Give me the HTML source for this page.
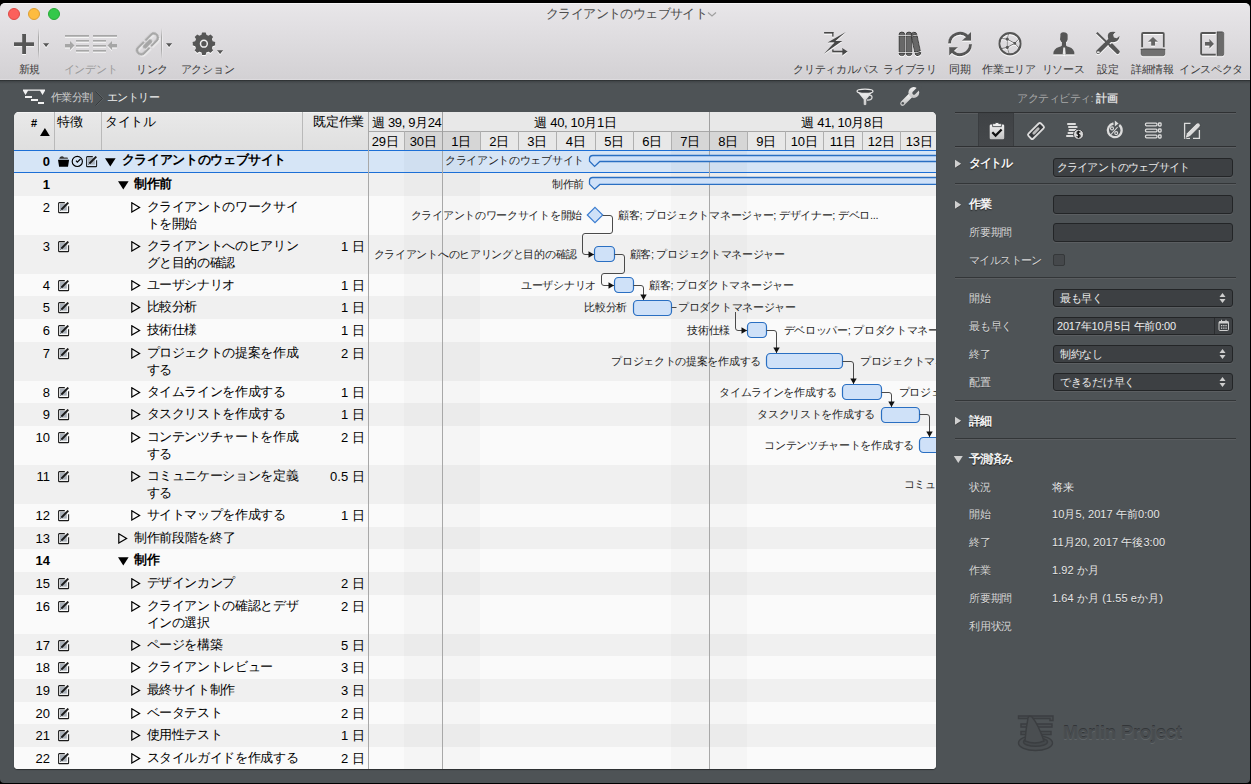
<!DOCTYPE html><html><head><meta charset="utf-8"><style>

*{box-sizing:border-box}
html,body{margin:0;padding:0}
body{width:1251px;height:784px;overflow:hidden;background:#000;position:relative;font-family:"Liberation Sans", sans-serif}
.a{position:absolute;white-space:nowrap}
.tb{font-size:11px;color:#3a3a3a;line-height:12px;text-align:center;letter-spacing:-0.3px}
.cell{font-size:13px;color:#000;line-height:15px;letter-spacing:-0.35px}
.num{font-size:13px;letter-spacing:0}
.ins{font-size:11px;color:#d8d8d8;line-height:12px}

</style></head><body>
<div class="a" style="left:0;top:3px;width:1250px;height:780px;border-radius:5px 5px 4px 4px;background:#4e5356;overflow:hidden"></div>
<div class="a" style="left:0;top:80px;width:1250px;height:4px;background:linear-gradient(#272a2c,rgba(60,64,67,0.6) 40%,rgba(78,83,86,0))"></div>
<div class="a" style="left:0;top:3px;width:1250px;height:77px;border-radius:5px 5px 0 0;background:linear-gradient(#e8e6e9,#d3d1d4);border-top:1px solid #f4f3f5;border-bottom:1px solid #dddbde"></div>
<div class="a" style="left:8px;top:8px;width:12px;height:12px;border-radius:50%;background:#fc605c;border:0.5px solid #de4a46"></div>
<div class="a" style="left:28px;top:8px;width:12px;height:12px;border-radius:50%;background:#fdbc40;border:0.5px solid #de9f34"></div>
<div class="a" style="left:48px;top:8px;width:12px;height:12px;border-radius:50%;background:#34c84a;border:0.5px solid #27aa35"></div>
<div class="a" style="left:546px;top:6px;font-size:13px;line-height:15px;color:#4d4d4d;letter-spacing:-0.6px">クライアントのウェブサイト</div>
<svg class="a" style="left:706px;top:10px" width="12" height="8"><path d="M2 2.5 L6 6 L10 2.5" stroke="#a0a0a0" stroke-width="1.2" fill="none"/></svg>
<div class="a tb" style="left:-20.5px;width:100px;top:63px;color:#3a3a3a">新規</div>
<div class="a tb" style="left:40.5px;width:100px;top:63px;color:#9a9a9a">インデント</div>
<div class="a tb" style="left:102px;width:100px;top:63px;color:#3a3a3a">リンク</div>
<div class="a tb" style="left:157.5px;width:100px;top:63px;color:#3a3a3a">アクション</div>
<div class="a tb" style="left:786px;width:100px;top:63px;color:#3a3a3a">クリティカルパス</div>
<div class="a tb" style="left:860px;width:100px;top:63px;color:#3a3a3a">ライブラリ</div>
<div class="a tb" style="left:910px;width:100px;top:63px;color:#3a3a3a">同期</div>
<div class="a tb" style="left:959px;width:100px;top:63px;color:#3a3a3a">作業エリア</div>
<div class="a tb" style="left:1013px;width:100px;top:63px;color:#3a3a3a">リソース</div>
<div class="a tb" style="left:1058px;width:100px;top:63px;color:#3a3a3a">設定</div>
<div class="a tb" style="left:1102.5px;width:100px;top:63px;color:#3a3a3a">詳細情報</div>
<div class="a tb" style="left:1161px;width:100px;top:63px;color:#3a3a3a">インスペクタ</div>
<div class="a" style="left:14px;top:112px;width:922px;height:657px;border-radius:5px 5px 4px 4px;background:#fafafa;overflow:hidden;box-shadow:0 1px 1px rgba(0,0,0,0.45)">
<div class="a" style="left:0;top:0;width:922px;height:38px;background:linear-gradient(#e9e9e9,#dfdfdf);box-shadow:inset 0 1px 0 #f4f4f4"></div>
<div class="a" style="left:40px;top:0;width:1px;height:38px;background:#b9b9b9"></div>
<div class="a" style="left:87px;top:0;width:1px;height:38px;background:#b9b9b9"></div>
<div class="a" style="left:288px;top:0;width:1px;height:38px;background:#b9b9b9"></div>
<div class="a cell" style="left:17px;top:4px;font-size:11px;font-weight:bold">#</div>
<svg class="a" style="left:25.5px;top:16.19999999999999px" width="11" height="9"><path d="M0 8 L4.9 0 L9.8 8 Z" fill="#000"/></svg>
<div class="a cell" style="left:43px;top:2px">特徴</div>
<div class="a cell" style="left:91px;top:2px">タイトル</div>
<div class="a cell" style="left:286px;width:64px;text-align:right;top:2px">既定作業</div>
<div class="a" style="left:0;top:38px;width:922px;height:23px;background:#d6e5f6"></div>
<div class="a" style="left:0;top:61px;width:922px;height:23px;background:#f0f0f0"></div>
<div class="a" style="left:0;top:84px;width:922px;height:39px;background:#fafafa"></div>
<div class="a" style="left:0;top:123px;width:922px;height:39px;background:#f0f0f0"></div>
<div class="a" style="left:0;top:162px;width:922px;height:22px;background:#fafafa"></div>
<div class="a" style="left:0;top:184px;width:922px;height:23px;background:#f0f0f0"></div>
<div class="a" style="left:0;top:207px;width:922px;height:23px;background:#fafafa"></div>
<div class="a" style="left:0;top:230px;width:922px;height:39px;background:#f0f0f0"></div>
<div class="a" style="left:0;top:269px;width:922px;height:22px;background:#fafafa"></div>
<div class="a" style="left:0;top:291px;width:922px;height:23px;background:#f0f0f0"></div>
<div class="a" style="left:0;top:314px;width:922px;height:39px;background:#fafafa"></div>
<div class="a" style="left:0;top:353px;width:922px;height:39px;background:#f0f0f0"></div>
<div class="a" style="left:0;top:392px;width:922px;height:23px;background:#fafafa"></div>
<div class="a" style="left:0;top:415px;width:922px;height:22px;background:#f0f0f0"></div>
<div class="a" style="left:0;top:437px;width:922px;height:23px;background:#fafafa"></div>
<div class="a" style="left:0;top:460px;width:922px;height:23px;background:#f0f0f0"></div>
<div class="a" style="left:0;top:483px;width:922px;height:39px;background:#fafafa"></div>
<div class="a" style="left:0;top:522px;width:922px;height:22px;background:#f0f0f0"></div>
<div class="a" style="left:0;top:544px;width:922px;height:23px;background:#fafafa"></div>
<div class="a" style="left:0;top:567px;width:922px;height:23px;background:#f0f0f0"></div>
<div class="a" style="left:0;top:590px;width:922px;height:22px;background:#fafafa"></div>
<div class="a" style="left:0;top:612px;width:922px;height:23px;background:#f0f0f0"></div>
<div class="a" style="left:0;top:635px;width:922px;height:22px;background:#fafafa"></div>
<div class="a" style="left:0;top:38px;width:922px;height:1px;background:#1c6fd6"></div>
<div class="a" style="left:0;top:60px;width:922px;height:1px;background:#1c6fd6"></div>
<div class="a cell num" style="left:0px;width:36px;text-align:right;top:42px;font-weight:bold;">0</div>
<svg class="a" style="left:91px;top:46px" width="12" height="10"><path d="M0 0.2 L10.6 0.2 L5.3 8.4 Z" fill="#000"/></svg>
<div class="a cell" style="left:107.7px;top:40px;font-weight:bold;">クライアントのウェブサイト</div>
<svg class="a" style="left:72px;top:44px" width="12" height="12"><rect x="2" y="1.8" width="6.8" height="6.8" fill="#aab1ba"/><path d="M 6.8 0.6 L 1.3 0.6 Q 0.6 0.6 0.6 1.3 L 0.6 9.9 Q 0.6 10.6 1.3 10.6 L 9.9 10.6 Q 10.6 10.6 10.6 9.9 L 10.6 4.2" fill="none" stroke="#1a1a1a" stroke-width="1.05"/><path d="M 3.4 7.5 L 10.3 0.6" stroke="#1a1a1a" stroke-width="1.9"/><path d="M 2.6 8.4 L 3.3 7.6" stroke="#111" stroke-width="1"/></svg>
<svg class="a" style="left:44px;top:44px" width="12" height="12"><path d="M1.2 2.8 Q1.5 0.2 4 0.3 Q5.2 0.4 6 1.5 L9 1.5 Q10 1.5 10 2.8 Z" fill="#333"/><path d="M0 3.7 L11.1 3.7 L10 10.7 L1.1 10.7 Z" fill="#000"/></svg>
<svg class="a" style="left:57px;top:43px" width="13" height="13"><circle cx="6.3" cy="6.4" r="5.1" fill="none" stroke="#000" stroke-width="1.15"/><path d="M5 5.7 L6.3 7.2 L9.5 4" fill="none" stroke="#000" stroke-width="1.15"/></svg>
<div class="a cell num" style="left:0px;width:36px;text-align:right;top:65px;font-weight:bold;">1</div>
<svg class="a" style="left:104px;top:69px" width="12" height="10"><path d="M0 0.2 L10.6 0.2 L5.3 8.4 Z" fill="#000"/></svg>
<div class="a cell" style="left:120px;top:64px;font-weight:bold;">制作前</div>
<div class="a cell num" style="left:0px;width:36px;text-align:right;top:88px;">2</div>
<svg class="a" style="left:117px;top:90px" width="10" height="11"><path d="M0.8 0.8 L8.6 5.4 L0.8 10 Z" fill="none" stroke="#000" stroke-width="1.2"/></svg>
<div class="a cell" style="left:132.5px;top:87px;">クライアントのワークサイ</div>
<div class="a cell" style="left:132.5px;top:104px;">トを開始</div>
<svg class="a" style="left:44px;top:90px" width="12" height="12"><rect x="2" y="1.8" width="6.8" height="6.8" fill="#aab1ba"/><path d="M 6.8 0.6 L 1.3 0.6 Q 0.6 0.6 0.6 1.3 L 0.6 9.9 Q 0.6 10.6 1.3 10.6 L 9.9 10.6 Q 10.6 10.6 10.6 9.9 L 10.6 4.2" fill="none" stroke="#1a1a1a" stroke-width="1.05"/><path d="M 3.4 7.5 L 10.3 0.6" stroke="#1a1a1a" stroke-width="1.9"/><path d="M 2.6 8.4 L 3.3 7.6" stroke="#111" stroke-width="1"/></svg>
<div class="a cell num" style="left:0px;width:36px;text-align:right;top:127px;">3</div>
<svg class="a" style="left:117px;top:129px" width="10" height="11"><path d="M0.8 0.8 L8.6 5.4 L0.8 10 Z" fill="none" stroke="#000" stroke-width="1.2"/></svg>
<div class="a cell" style="left:132.5px;top:126px;">クライアントへのヒアリン</div>
<div class="a cell" style="left:132.5px;top:143px;">グと目的の確認</div>
<div class="a cell" style="left:276.8px;width:74px;text-align:right;top:127px;letter-spacing:0">1 日</div>
<svg class="a" style="left:44px;top:129px" width="12" height="12"><rect x="2" y="1.8" width="6.8" height="6.8" fill="#aab1ba"/><path d="M 6.8 0.6 L 1.3 0.6 Q 0.6 0.6 0.6 1.3 L 0.6 9.9 Q 0.6 10.6 1.3 10.6 L 9.9 10.6 Q 10.6 10.6 10.6 9.9 L 10.6 4.2" fill="none" stroke="#1a1a1a" stroke-width="1.05"/><path d="M 3.4 7.5 L 10.3 0.6" stroke="#1a1a1a" stroke-width="1.9"/><path d="M 2.6 8.4 L 3.3 7.6" stroke="#111" stroke-width="1"/></svg>
<div class="a cell num" style="left:0px;width:36px;text-align:right;top:166px;">4</div>
<svg class="a" style="left:117px;top:168px" width="10" height="11"><path d="M0.8 0.8 L8.6 5.4 L0.8 10 Z" fill="none" stroke="#000" stroke-width="1.2"/></svg>
<div class="a cell" style="left:132.5px;top:165px;">ユーザシナリオ</div>
<div class="a cell" style="left:276.8px;width:74px;text-align:right;top:166px;letter-spacing:0">1 日</div>
<svg class="a" style="left:44px;top:168px" width="12" height="12"><rect x="2" y="1.8" width="6.8" height="6.8" fill="#aab1ba"/><path d="M 6.8 0.6 L 1.3 0.6 Q 0.6 0.6 0.6 1.3 L 0.6 9.9 Q 0.6 10.6 1.3 10.6 L 9.9 10.6 Q 10.6 10.6 10.6 9.9 L 10.6 4.2" fill="none" stroke="#1a1a1a" stroke-width="1.05"/><path d="M 3.4 7.5 L 10.3 0.6" stroke="#1a1a1a" stroke-width="1.9"/><path d="M 2.6 8.4 L 3.3 7.6" stroke="#111" stroke-width="1"/></svg>
<div class="a cell num" style="left:0px;width:36px;text-align:right;top:188px;">5</div>
<svg class="a" style="left:117px;top:190px" width="10" height="11"><path d="M0.8 0.8 L8.6 5.4 L0.8 10 Z" fill="none" stroke="#000" stroke-width="1.2"/></svg>
<div class="a cell" style="left:132.5px;top:187px;">比較分析</div>
<div class="a cell" style="left:276.8px;width:74px;text-align:right;top:188px;letter-spacing:0">1 日</div>
<svg class="a" style="left:44px;top:190px" width="12" height="12"><rect x="2" y="1.8" width="6.8" height="6.8" fill="#aab1ba"/><path d="M 6.8 0.6 L 1.3 0.6 Q 0.6 0.6 0.6 1.3 L 0.6 9.9 Q 0.6 10.6 1.3 10.6 L 9.9 10.6 Q 10.6 10.6 10.6 9.9 L 10.6 4.2" fill="none" stroke="#1a1a1a" stroke-width="1.05"/><path d="M 3.4 7.5 L 10.3 0.6" stroke="#1a1a1a" stroke-width="1.9"/><path d="M 2.6 8.4 L 3.3 7.6" stroke="#111" stroke-width="1"/></svg>
<div class="a cell num" style="left:0px;width:36px;text-align:right;top:211px;">6</div>
<svg class="a" style="left:117px;top:213px" width="10" height="11"><path d="M0.8 0.8 L8.6 5.4 L0.8 10 Z" fill="none" stroke="#000" stroke-width="1.2"/></svg>
<div class="a cell" style="left:132.5px;top:210px;">技術仕様</div>
<div class="a cell" style="left:276.8px;width:74px;text-align:right;top:211px;letter-spacing:0">1 日</div>
<svg class="a" style="left:44px;top:213px" width="12" height="12"><rect x="2" y="1.8" width="6.8" height="6.8" fill="#aab1ba"/><path d="M 6.8 0.6 L 1.3 0.6 Q 0.6 0.6 0.6 1.3 L 0.6 9.9 Q 0.6 10.6 1.3 10.6 L 9.9 10.6 Q 10.6 10.6 10.6 9.9 L 10.6 4.2" fill="none" stroke="#1a1a1a" stroke-width="1.05"/><path d="M 3.4 7.5 L 10.3 0.6" stroke="#1a1a1a" stroke-width="1.9"/><path d="M 2.6 8.4 L 3.3 7.6" stroke="#111" stroke-width="1"/></svg>
<div class="a cell num" style="left:0px;width:36px;text-align:right;top:234px;">7</div>
<svg class="a" style="left:117px;top:236px" width="10" height="11"><path d="M0.8 0.8 L8.6 5.4 L0.8 10 Z" fill="none" stroke="#000" stroke-width="1.2"/></svg>
<div class="a cell" style="left:132.5px;top:233px;">プロジェクトの提案を作成</div>
<div class="a cell" style="left:132.5px;top:250px;">する</div>
<div class="a cell" style="left:276.8px;width:74px;text-align:right;top:234px;letter-spacing:0">2 日</div>
<svg class="a" style="left:44px;top:236px" width="12" height="12"><rect x="2" y="1.8" width="6.8" height="6.8" fill="#aab1ba"/><path d="M 6.8 0.6 L 1.3 0.6 Q 0.6 0.6 0.6 1.3 L 0.6 9.9 Q 0.6 10.6 1.3 10.6 L 9.9 10.6 Q 10.6 10.6 10.6 9.9 L 10.6 4.2" fill="none" stroke="#1a1a1a" stroke-width="1.05"/><path d="M 3.4 7.5 L 10.3 0.6" stroke="#1a1a1a" stroke-width="1.9"/><path d="M 2.6 8.4 L 3.3 7.6" stroke="#111" stroke-width="1"/></svg>
<div class="a cell num" style="left:0px;width:36px;text-align:right;top:273px;">8</div>
<svg class="a" style="left:117px;top:275px" width="10" height="11"><path d="M0.8 0.8 L8.6 5.4 L0.8 10 Z" fill="none" stroke="#000" stroke-width="1.2"/></svg>
<div class="a cell" style="left:132.5px;top:272px;">タイムラインを作成する</div>
<div class="a cell" style="left:276.8px;width:74px;text-align:right;top:273px;letter-spacing:0">1 日</div>
<svg class="a" style="left:44px;top:275px" width="12" height="12"><rect x="2" y="1.8" width="6.8" height="6.8" fill="#aab1ba"/><path d="M 6.8 0.6 L 1.3 0.6 Q 0.6 0.6 0.6 1.3 L 0.6 9.9 Q 0.6 10.6 1.3 10.6 L 9.9 10.6 Q 10.6 10.6 10.6 9.9 L 10.6 4.2" fill="none" stroke="#1a1a1a" stroke-width="1.05"/><path d="M 3.4 7.5 L 10.3 0.6" stroke="#1a1a1a" stroke-width="1.9"/><path d="M 2.6 8.4 L 3.3 7.6" stroke="#111" stroke-width="1"/></svg>
<div class="a cell num" style="left:0px;width:36px;text-align:right;top:295px;">9</div>
<svg class="a" style="left:117px;top:297px" width="10" height="11"><path d="M0.8 0.8 L8.6 5.4 L0.8 10 Z" fill="none" stroke="#000" stroke-width="1.2"/></svg>
<div class="a cell" style="left:132.5px;top:294px;">タスクリストを作成する</div>
<div class="a cell" style="left:276.8px;width:74px;text-align:right;top:295px;letter-spacing:0">1 日</div>
<svg class="a" style="left:44px;top:297px" width="12" height="12"><rect x="2" y="1.8" width="6.8" height="6.8" fill="#aab1ba"/><path d="M 6.8 0.6 L 1.3 0.6 Q 0.6 0.6 0.6 1.3 L 0.6 9.9 Q 0.6 10.6 1.3 10.6 L 9.9 10.6 Q 10.6 10.6 10.6 9.9 L 10.6 4.2" fill="none" stroke="#1a1a1a" stroke-width="1.05"/><path d="M 3.4 7.5 L 10.3 0.6" stroke="#1a1a1a" stroke-width="1.9"/><path d="M 2.6 8.4 L 3.3 7.6" stroke="#111" stroke-width="1"/></svg>
<div class="a cell num" style="left:0px;width:36px;text-align:right;top:318px;">10</div>
<svg class="a" style="left:117px;top:320px" width="10" height="11"><path d="M0.8 0.8 L8.6 5.4 L0.8 10 Z" fill="none" stroke="#000" stroke-width="1.2"/></svg>
<div class="a cell" style="left:132.5px;top:317px;">コンテンツチャートを作成</div>
<div class="a cell" style="left:132.5px;top:334px;">する</div>
<div class="a cell" style="left:276.8px;width:74px;text-align:right;top:318px;letter-spacing:0">2 日</div>
<svg class="a" style="left:44px;top:320px" width="12" height="12"><rect x="2" y="1.8" width="6.8" height="6.8" fill="#aab1ba"/><path d="M 6.8 0.6 L 1.3 0.6 Q 0.6 0.6 0.6 1.3 L 0.6 9.9 Q 0.6 10.6 1.3 10.6 L 9.9 10.6 Q 10.6 10.6 10.6 9.9 L 10.6 4.2" fill="none" stroke="#1a1a1a" stroke-width="1.05"/><path d="M 3.4 7.5 L 10.3 0.6" stroke="#1a1a1a" stroke-width="1.9"/><path d="M 2.6 8.4 L 3.3 7.6" stroke="#111" stroke-width="1"/></svg>
<div class="a cell num" style="left:0px;width:36px;text-align:right;top:357px;">11</div>
<svg class="a" style="left:117px;top:359px" width="10" height="11"><path d="M0.8 0.8 L8.6 5.4 L0.8 10 Z" fill="none" stroke="#000" stroke-width="1.2"/></svg>
<div class="a cell" style="left:132.5px;top:356px;">コミュニケーションを定義</div>
<div class="a cell" style="left:132.5px;top:373px;">する</div>
<div class="a cell" style="left:276.8px;width:74px;text-align:right;top:357px;letter-spacing:0">0.5 日</div>
<svg class="a" style="left:44px;top:359px" width="12" height="12"><rect x="2" y="1.8" width="6.8" height="6.8" fill="#aab1ba"/><path d="M 6.8 0.6 L 1.3 0.6 Q 0.6 0.6 0.6 1.3 L 0.6 9.9 Q 0.6 10.6 1.3 10.6 L 9.9 10.6 Q 10.6 10.6 10.6 9.9 L 10.6 4.2" fill="none" stroke="#1a1a1a" stroke-width="1.05"/><path d="M 3.4 7.5 L 10.3 0.6" stroke="#1a1a1a" stroke-width="1.9"/><path d="M 2.6 8.4 L 3.3 7.6" stroke="#111" stroke-width="1"/></svg>
<div class="a cell num" style="left:0px;width:36px;text-align:right;top:396px;">12</div>
<svg class="a" style="left:117px;top:398px" width="10" height="11"><path d="M0.8 0.8 L8.6 5.4 L0.8 10 Z" fill="none" stroke="#000" stroke-width="1.2"/></svg>
<div class="a cell" style="left:132.5px;top:395px;">サイトマップを作成する</div>
<div class="a cell" style="left:276.8px;width:74px;text-align:right;top:396px;letter-spacing:0">1 日</div>
<svg class="a" style="left:44px;top:398px" width="12" height="12"><rect x="2" y="1.8" width="6.8" height="6.8" fill="#aab1ba"/><path d="M 6.8 0.6 L 1.3 0.6 Q 0.6 0.6 0.6 1.3 L 0.6 9.9 Q 0.6 10.6 1.3 10.6 L 9.9 10.6 Q 10.6 10.6 10.6 9.9 L 10.6 4.2" fill="none" stroke="#1a1a1a" stroke-width="1.05"/><path d="M 3.4 7.5 L 10.3 0.6" stroke="#1a1a1a" stroke-width="1.9"/><path d="M 2.6 8.4 L 3.3 7.6" stroke="#111" stroke-width="1"/></svg>
<div class="a cell num" style="left:0px;width:36px;text-align:right;top:419px;">13</div>
<svg class="a" style="left:104px;top:421px" width="10" height="11"><path d="M0.8 0.8 L8.6 5.4 L0.8 10 Z" fill="none" stroke="#000" stroke-width="1.2"/></svg>
<div class="a cell" style="left:120px;top:418px;">制作前段階を終了</div>
<svg class="a" style="left:44px;top:421px" width="12" height="12"><rect x="2" y="1.8" width="6.8" height="6.8" fill="#aab1ba"/><path d="M 6.8 0.6 L 1.3 0.6 Q 0.6 0.6 0.6 1.3 L 0.6 9.9 Q 0.6 10.6 1.3 10.6 L 9.9 10.6 Q 10.6 10.6 10.6 9.9 L 10.6 4.2" fill="none" stroke="#1a1a1a" stroke-width="1.05"/><path d="M 3.4 7.5 L 10.3 0.6" stroke="#1a1a1a" stroke-width="1.9"/><path d="M 2.6 8.4 L 3.3 7.6" stroke="#111" stroke-width="1"/></svg>
<div class="a cell num" style="left:0px;width:36px;text-align:right;top:441px;font-weight:bold;">14</div>
<svg class="a" style="left:104px;top:445px" width="12" height="10"><path d="M0 0.2 L10.6 0.2 L5.3 8.4 Z" fill="#000"/></svg>
<div class="a cell" style="left:120px;top:440px;font-weight:bold;">制作</div>
<div class="a cell num" style="left:0px;width:36px;text-align:right;top:464px;">15</div>
<svg class="a" style="left:117px;top:466px" width="10" height="11"><path d="M0.8 0.8 L8.6 5.4 L0.8 10 Z" fill="none" stroke="#000" stroke-width="1.2"/></svg>
<div class="a cell" style="left:132.5px;top:463px;">デザインカンプ</div>
<div class="a cell" style="left:276.8px;width:74px;text-align:right;top:464px;letter-spacing:0">2 日</div>
<svg class="a" style="left:44px;top:466px" width="12" height="12"><rect x="2" y="1.8" width="6.8" height="6.8" fill="#aab1ba"/><path d="M 6.8 0.6 L 1.3 0.6 Q 0.6 0.6 0.6 1.3 L 0.6 9.9 Q 0.6 10.6 1.3 10.6 L 9.9 10.6 Q 10.6 10.6 10.6 9.9 L 10.6 4.2" fill="none" stroke="#1a1a1a" stroke-width="1.05"/><path d="M 3.4 7.5 L 10.3 0.6" stroke="#1a1a1a" stroke-width="1.9"/><path d="M 2.6 8.4 L 3.3 7.6" stroke="#111" stroke-width="1"/></svg>
<div class="a cell num" style="left:0px;width:36px;text-align:right;top:487px;">16</div>
<svg class="a" style="left:117px;top:489px" width="10" height="11"><path d="M0.8 0.8 L8.6 5.4 L0.8 10 Z" fill="none" stroke="#000" stroke-width="1.2"/></svg>
<div class="a cell" style="left:132.5px;top:486px;">クライアントの確認とデザ</div>
<div class="a cell" style="left:132.5px;top:503px;">インの選択</div>
<div class="a cell" style="left:276.8px;width:74px;text-align:right;top:487px;letter-spacing:0">2 日</div>
<svg class="a" style="left:44px;top:489px" width="12" height="12"><rect x="2" y="1.8" width="6.8" height="6.8" fill="#aab1ba"/><path d="M 6.8 0.6 L 1.3 0.6 Q 0.6 0.6 0.6 1.3 L 0.6 9.9 Q 0.6 10.6 1.3 10.6 L 9.9 10.6 Q 10.6 10.6 10.6 9.9 L 10.6 4.2" fill="none" stroke="#1a1a1a" stroke-width="1.05"/><path d="M 3.4 7.5 L 10.3 0.6" stroke="#1a1a1a" stroke-width="1.9"/><path d="M 2.6 8.4 L 3.3 7.6" stroke="#111" stroke-width="1"/></svg>
<div class="a cell num" style="left:0px;width:36px;text-align:right;top:526px;">17</div>
<svg class="a" style="left:117px;top:528px" width="10" height="11"><path d="M0.8 0.8 L8.6 5.4 L0.8 10 Z" fill="none" stroke="#000" stroke-width="1.2"/></svg>
<div class="a cell" style="left:132.5px;top:525px;">ページを構築</div>
<div class="a cell" style="left:276.8px;width:74px;text-align:right;top:526px;letter-spacing:0">5 日</div>
<svg class="a" style="left:44px;top:528px" width="12" height="12"><rect x="2" y="1.8" width="6.8" height="6.8" fill="#aab1ba"/><path d="M 6.8 0.6 L 1.3 0.6 Q 0.6 0.6 0.6 1.3 L 0.6 9.9 Q 0.6 10.6 1.3 10.6 L 9.9 10.6 Q 10.6 10.6 10.6 9.9 L 10.6 4.2" fill="none" stroke="#1a1a1a" stroke-width="1.05"/><path d="M 3.4 7.5 L 10.3 0.6" stroke="#1a1a1a" stroke-width="1.9"/><path d="M 2.6 8.4 L 3.3 7.6" stroke="#111" stroke-width="1"/></svg>
<div class="a cell num" style="left:0px;width:36px;text-align:right;top:548px;">18</div>
<svg class="a" style="left:117px;top:550px" width="10" height="11"><path d="M0.8 0.8 L8.6 5.4 L0.8 10 Z" fill="none" stroke="#000" stroke-width="1.2"/></svg>
<div class="a cell" style="left:132.5px;top:547px;">クライアントレビュー</div>
<div class="a cell" style="left:276.8px;width:74px;text-align:right;top:548px;letter-spacing:0">3 日</div>
<svg class="a" style="left:44px;top:550px" width="12" height="12"><rect x="2" y="1.8" width="6.8" height="6.8" fill="#aab1ba"/><path d="M 6.8 0.6 L 1.3 0.6 Q 0.6 0.6 0.6 1.3 L 0.6 9.9 Q 0.6 10.6 1.3 10.6 L 9.9 10.6 Q 10.6 10.6 10.6 9.9 L 10.6 4.2" fill="none" stroke="#1a1a1a" stroke-width="1.05"/><path d="M 3.4 7.5 L 10.3 0.6" stroke="#1a1a1a" stroke-width="1.9"/><path d="M 2.6 8.4 L 3.3 7.6" stroke="#111" stroke-width="1"/></svg>
<div class="a cell num" style="left:0px;width:36px;text-align:right;top:571px;">19</div>
<svg class="a" style="left:117px;top:573px" width="10" height="11"><path d="M0.8 0.8 L8.6 5.4 L0.8 10 Z" fill="none" stroke="#000" stroke-width="1.2"/></svg>
<div class="a cell" style="left:132.5px;top:570px;">最終サイト制作</div>
<div class="a cell" style="left:276.8px;width:74px;text-align:right;top:571px;letter-spacing:0">3 日</div>
<svg class="a" style="left:44px;top:573px" width="12" height="12"><rect x="2" y="1.8" width="6.8" height="6.8" fill="#aab1ba"/><path d="M 6.8 0.6 L 1.3 0.6 Q 0.6 0.6 0.6 1.3 L 0.6 9.9 Q 0.6 10.6 1.3 10.6 L 9.9 10.6 Q 10.6 10.6 10.6 9.9 L 10.6 4.2" fill="none" stroke="#1a1a1a" stroke-width="1.05"/><path d="M 3.4 7.5 L 10.3 0.6" stroke="#1a1a1a" stroke-width="1.9"/><path d="M 2.6 8.4 L 3.3 7.6" stroke="#111" stroke-width="1"/></svg>
<div class="a cell num" style="left:0px;width:36px;text-align:right;top:594px;">20</div>
<svg class="a" style="left:117px;top:596px" width="10" height="11"><path d="M0.8 0.8 L8.6 5.4 L0.8 10 Z" fill="none" stroke="#000" stroke-width="1.2"/></svg>
<div class="a cell" style="left:132.5px;top:593px;">ベータテスト</div>
<div class="a cell" style="left:276.8px;width:74px;text-align:right;top:594px;letter-spacing:0">2 日</div>
<svg class="a" style="left:44px;top:596px" width="12" height="12"><rect x="2" y="1.8" width="6.8" height="6.8" fill="#aab1ba"/><path d="M 6.8 0.6 L 1.3 0.6 Q 0.6 0.6 0.6 1.3 L 0.6 9.9 Q 0.6 10.6 1.3 10.6 L 9.9 10.6 Q 10.6 10.6 10.6 9.9 L 10.6 4.2" fill="none" stroke="#1a1a1a" stroke-width="1.05"/><path d="M 3.4 7.5 L 10.3 0.6" stroke="#1a1a1a" stroke-width="1.9"/><path d="M 2.6 8.4 L 3.3 7.6" stroke="#111" stroke-width="1"/></svg>
<div class="a cell num" style="left:0px;width:36px;text-align:right;top:616px;">21</div>
<svg class="a" style="left:117px;top:618px" width="10" height="11"><path d="M0.8 0.8 L8.6 5.4 L0.8 10 Z" fill="none" stroke="#000" stroke-width="1.2"/></svg>
<div class="a cell" style="left:132.5px;top:615px;">使用性テスト</div>
<div class="a cell" style="left:276.8px;width:74px;text-align:right;top:616px;letter-spacing:0">1 日</div>
<svg class="a" style="left:44px;top:618px" width="12" height="12"><rect x="2" y="1.8" width="6.8" height="6.8" fill="#aab1ba"/><path d="M 6.8 0.6 L 1.3 0.6 Q 0.6 0.6 0.6 1.3 L 0.6 9.9 Q 0.6 10.6 1.3 10.6 L 9.9 10.6 Q 10.6 10.6 10.6 9.9 L 10.6 4.2" fill="none" stroke="#1a1a1a" stroke-width="1.05"/><path d="M 3.4 7.5 L 10.3 0.6" stroke="#1a1a1a" stroke-width="1.9"/><path d="M 2.6 8.4 L 3.3 7.6" stroke="#111" stroke-width="1"/></svg>
<div class="a cell num" style="left:0px;width:36px;text-align:right;top:639px;">22</div>
<svg class="a" style="left:117px;top:641px" width="10" height="11"><path d="M0.8 0.8 L8.6 5.4 L0.8 10 Z" fill="none" stroke="#000" stroke-width="1.2"/></svg>
<div class="a cell" style="left:132.5px;top:638px;">スタイルガイドを作成する</div>
<div class="a cell" style="left:276.8px;width:74px;text-align:right;top:639px;letter-spacing:0">2 日</div>
<svg class="a" style="left:44px;top:641px" width="12" height="12"><rect x="2" y="1.8" width="6.8" height="6.8" fill="#aab1ba"/><path d="M 6.8 0.6 L 1.3 0.6 Q 0.6 0.6 0.6 1.3 L 0.6 9.9 Q 0.6 10.6 1.3 10.6 L 9.9 10.6 Q 10.6 10.6 10.6 9.9 L 10.6 4.2" fill="none" stroke="#1a1a1a" stroke-width="1.05"/><path d="M 3.4 7.5 L 10.3 0.6" stroke="#1a1a1a" stroke-width="1.9"/><path d="M 2.6 8.4 L 3.3 7.6" stroke="#111" stroke-width="1"/></svg>
<svg class="a" style="left:354px;top:0" width="568" height="657" viewBox="368 112 568 657">
<rect x="368" y="112" width="568" height="38" fill="#e8e8e8"/>
<rect x="404" y="131" width="38" height="19" fill="#d6d6d6"/>
<rect x="442" y="131" width="38" height="19" fill="#d6d6d6"/>
<rect x="671" y="131" width="38" height="19" fill="#d6d6d6"/>
<rect x="709" y="131" width="38" height="19" fill="#d6d6d6"/>
<rect x="404" y="150" width="38" height="23" fill="#d0dff0"/>
<rect x="442" y="150" width="38" height="23" fill="#d0dff0"/>
<rect x="671" y="150" width="38" height="23" fill="#d0dff0"/>
<rect x="709" y="150" width="38" height="23" fill="#d0dff0"/>
<rect x="404" y="173" width="38" height="23" fill="#ebebeb"/>
<rect x="442" y="173" width="38" height="23" fill="#ebebeb"/>
<rect x="671" y="173" width="38" height="23" fill="#ebebeb"/>
<rect x="709" y="173" width="38" height="23" fill="#ebebeb"/>
<rect x="404" y="196" width="38" height="39" fill="#f5f5f5"/>
<rect x="442" y="196" width="38" height="39" fill="#f5f5f5"/>
<rect x="671" y="196" width="38" height="39" fill="#f5f5f5"/>
<rect x="709" y="196" width="38" height="39" fill="#f5f5f5"/>
<rect x="404" y="235" width="38" height="39" fill="#ebebeb"/>
<rect x="442" y="235" width="38" height="39" fill="#ebebeb"/>
<rect x="671" y="235" width="38" height="39" fill="#ebebeb"/>
<rect x="709" y="235" width="38" height="39" fill="#ebebeb"/>
<rect x="404" y="274" width="38" height="22" fill="#f5f5f5"/>
<rect x="442" y="274" width="38" height="22" fill="#f5f5f5"/>
<rect x="671" y="274" width="38" height="22" fill="#f5f5f5"/>
<rect x="709" y="274" width="38" height="22" fill="#f5f5f5"/>
<rect x="404" y="296" width="38" height="23" fill="#ebebeb"/>
<rect x="442" y="296" width="38" height="23" fill="#ebebeb"/>
<rect x="671" y="296" width="38" height="23" fill="#ebebeb"/>
<rect x="709" y="296" width="38" height="23" fill="#ebebeb"/>
<rect x="404" y="319" width="38" height="23" fill="#f5f5f5"/>
<rect x="442" y="319" width="38" height="23" fill="#f5f5f5"/>
<rect x="671" y="319" width="38" height="23" fill="#f5f5f5"/>
<rect x="709" y="319" width="38" height="23" fill="#f5f5f5"/>
<rect x="404" y="342" width="38" height="39" fill="#ebebeb"/>
<rect x="442" y="342" width="38" height="39" fill="#ebebeb"/>
<rect x="671" y="342" width="38" height="39" fill="#ebebeb"/>
<rect x="709" y="342" width="38" height="39" fill="#ebebeb"/>
<rect x="404" y="381" width="38" height="22" fill="#f5f5f5"/>
<rect x="442" y="381" width="38" height="22" fill="#f5f5f5"/>
<rect x="671" y="381" width="38" height="22" fill="#f5f5f5"/>
<rect x="709" y="381" width="38" height="22" fill="#f5f5f5"/>
<rect x="404" y="403" width="38" height="23" fill="#ebebeb"/>
<rect x="442" y="403" width="38" height="23" fill="#ebebeb"/>
<rect x="671" y="403" width="38" height="23" fill="#ebebeb"/>
<rect x="709" y="403" width="38" height="23" fill="#ebebeb"/>
<rect x="404" y="426" width="38" height="39" fill="#f5f5f5"/>
<rect x="442" y="426" width="38" height="39" fill="#f5f5f5"/>
<rect x="671" y="426" width="38" height="39" fill="#f5f5f5"/>
<rect x="709" y="426" width="38" height="39" fill="#f5f5f5"/>
<rect x="404" y="465" width="38" height="39" fill="#ebebeb"/>
<rect x="442" y="465" width="38" height="39" fill="#ebebeb"/>
<rect x="671" y="465" width="38" height="39" fill="#ebebeb"/>
<rect x="709" y="465" width="38" height="39" fill="#ebebeb"/>
<rect x="404" y="504" width="38" height="23" fill="#f5f5f5"/>
<rect x="442" y="504" width="38" height="23" fill="#f5f5f5"/>
<rect x="671" y="504" width="38" height="23" fill="#f5f5f5"/>
<rect x="709" y="504" width="38" height="23" fill="#f5f5f5"/>
<rect x="404" y="527" width="38" height="22" fill="#ebebeb"/>
<rect x="442" y="527" width="38" height="22" fill="#ebebeb"/>
<rect x="671" y="527" width="38" height="22" fill="#ebebeb"/>
<rect x="709" y="527" width="38" height="22" fill="#ebebeb"/>
<rect x="404" y="549" width="38" height="23" fill="#f5f5f5"/>
<rect x="442" y="549" width="38" height="23" fill="#f5f5f5"/>
<rect x="671" y="549" width="38" height="23" fill="#f5f5f5"/>
<rect x="709" y="549" width="38" height="23" fill="#f5f5f5"/>
<rect x="404" y="572" width="38" height="23" fill="#ebebeb"/>
<rect x="442" y="572" width="38" height="23" fill="#ebebeb"/>
<rect x="671" y="572" width="38" height="23" fill="#ebebeb"/>
<rect x="709" y="572" width="38" height="23" fill="#ebebeb"/>
<rect x="404" y="595" width="38" height="39" fill="#f5f5f5"/>
<rect x="442" y="595" width="38" height="39" fill="#f5f5f5"/>
<rect x="671" y="595" width="38" height="39" fill="#f5f5f5"/>
<rect x="709" y="595" width="38" height="39" fill="#f5f5f5"/>
<rect x="404" y="634" width="38" height="22" fill="#ebebeb"/>
<rect x="442" y="634" width="38" height="22" fill="#ebebeb"/>
<rect x="671" y="634" width="38" height="22" fill="#ebebeb"/>
<rect x="709" y="634" width="38" height="22" fill="#ebebeb"/>
<rect x="404" y="656" width="38" height="23" fill="#f5f5f5"/>
<rect x="442" y="656" width="38" height="23" fill="#f5f5f5"/>
<rect x="671" y="656" width="38" height="23" fill="#f5f5f5"/>
<rect x="709" y="656" width="38" height="23" fill="#f5f5f5"/>
<rect x="404" y="679" width="38" height="23" fill="#ebebeb"/>
<rect x="442" y="679" width="38" height="23" fill="#ebebeb"/>
<rect x="671" y="679" width="38" height="23" fill="#ebebeb"/>
<rect x="709" y="679" width="38" height="23" fill="#ebebeb"/>
<rect x="404" y="702" width="38" height="22" fill="#f5f5f5"/>
<rect x="442" y="702" width="38" height="22" fill="#f5f5f5"/>
<rect x="671" y="702" width="38" height="22" fill="#f5f5f5"/>
<rect x="709" y="702" width="38" height="22" fill="#f5f5f5"/>
<rect x="404" y="724" width="38" height="23" fill="#ebebeb"/>
<rect x="442" y="724" width="38" height="23" fill="#ebebeb"/>
<rect x="671" y="724" width="38" height="23" fill="#ebebeb"/>
<rect x="709" y="724" width="38" height="23" fill="#ebebeb"/>
<rect x="404" y="747" width="38" height="22" fill="#f5f5f5"/>
<rect x="442" y="747" width="38" height="22" fill="#f5f5f5"/>
<rect x="671" y="747" width="38" height="22" fill="#f5f5f5"/>
<rect x="709" y="747" width="38" height="22" fill="#f5f5f5"/>
<rect x="368" y="150" width="568" height="1" fill="#1c6fd6"/>
<rect x="368" y="172" width="568" height="1" fill="#1c6fd6"/>
<rect x="368" y="131" width="568" height="1" fill="#a8a8a8"/>
<rect x="404" y="131" width="1" height="19" fill="#b0b0b0"/>
<rect x="442" y="112" width="1" height="38" fill="#a0a0a0"/>
<rect x="480" y="131" width="1" height="19" fill="#b0b0b0"/>
<rect x="518" y="131" width="1" height="19" fill="#b0b0b0"/>
<rect x="556" y="131" width="1" height="19" fill="#b0b0b0"/>
<rect x="595" y="131" width="1" height="19" fill="#b0b0b0"/>
<rect x="633" y="131" width="1" height="19" fill="#b0b0b0"/>
<rect x="671" y="131" width="1" height="19" fill="#b0b0b0"/>
<rect x="709" y="112" width="1" height="38" fill="#a0a0a0"/>
<rect x="747" y="131" width="1" height="19" fill="#b0b0b0"/>
<rect x="785" y="131" width="1" height="19" fill="#b0b0b0"/>
<rect x="823" y="131" width="1" height="19" fill="#b0b0b0"/>
<rect x="862" y="131" width="1" height="19" fill="#b0b0b0"/>
<rect x="900" y="131" width="1" height="19" fill="#b0b0b0"/>
<rect x="368" y="112" width="1" height="657" fill="#a8a8a8"/>
<rect x="442" y="151" width="1" height="618" fill="#a8a8a8"/>
<rect x="709" y="151" width="1" height="618" fill="#a8a8a8"/>
</svg>
<div class="a" style="left:355px;top:0;width:73px;height:19px;overflow:hidden"><div class="a cell" style="left:3px;top:3px">週 39, 9月24日</div></div>
<div class="a cell" style="left:428px;width:267px;text-align:center;top:3px">週 40, 10月1日</div>
<div class="a cell" style="left:695px;width:267px;text-align:center;top:3px">週 41, 10月8日</div>
<div class="a cell" style="left:352px;width:38px;text-align:center;top:22px">29日</div>
<div class="a cell" style="left:390px;width:38px;text-align:center;top:22px">30日</div>
<div class="a cell" style="left:428px;width:38px;text-align:center;top:22px">1日</div>
<div class="a cell" style="left:466px;width:38px;text-align:center;top:22px">2日</div>
<div class="a cell" style="left:504px;width:38px;text-align:center;top:22px">3日</div>
<div class="a cell" style="left:542px;width:39px;text-align:center;top:22px">4日</div>
<div class="a cell" style="left:581px;width:38px;text-align:center;top:22px">5日</div>
<div class="a cell" style="left:619px;width:38px;text-align:center;top:22px">6日</div>
<div class="a cell" style="left:657px;width:38px;text-align:center;top:22px">7日</div>
<div class="a cell" style="left:695px;width:38px;text-align:center;top:22px">8日</div>
<div class="a cell" style="left:733px;width:38px;text-align:center;top:22px">9日</div>
<div class="a cell" style="left:771px;width:38px;text-align:center;top:22px">10日</div>
<div class="a cell" style="left:809px;width:39px;text-align:center;top:22px">11日</div>
<div class="a cell" style="left:848px;width:38px;text-align:center;top:22px">12日</div>
<div class="a cell" style="left:886px;width:38px;text-align:center;top:22px">13日</div>
<svg class="a" style="left:355px;top:39px" width="567" height="618" viewBox="369 151 567 618">
<path d="M 950 155.5 L 592.8 155.5 Q 589.5 155.5 589.5 158.8 L 589.5 161.2 L 594.6 166.4 L 599.8 161.5 L 950 161.5 Z" fill="#cfe1f8" stroke="#2a6fc2" stroke-width="1.3"/>
<path d="M 950 177.5 L 592.8 177.5 Q 589.5 177.5 589.5 180.8 L 589.5 184.1 L 594.6 189.2 L 599.8 184.4 L 950 184.4 Z" fill="#cfe1f8" stroke="#2a6fc2" stroke-width="1.3"/>
<path d="M 595 207.4 L 602.7 215 L 595 222.6 L 587.3 215 Z" fill="#cfe1f8" stroke="#3b7dd0" stroke-width="1.2"/>
<rect x="594.5" y="246.5" width="20" height="15" rx="4" fill="#cfe1f8" stroke="#2a6fc2" stroke-width="1.2"/>
<rect x="614.5" y="277.5" width="19" height="15" rx="4" fill="#cfe1f8" stroke="#2a6fc2" stroke-width="1.2"/>
<rect x="633.5" y="300.5" width="38" height="15" rx="4" fill="#cfe1f8" stroke="#2a6fc2" stroke-width="1.2"/>
<rect x="747.5" y="322.5" width="19" height="15" rx="4" fill="#cfe1f8" stroke="#2a6fc2" stroke-width="1.2"/>
<rect x="766.5" y="353.5" width="76" height="15" rx="4" fill="#cfe1f8" stroke="#2a6fc2" stroke-width="1.2"/>
<rect x="842.5" y="384.5" width="39" height="15" rx="4" fill="#cfe1f8" stroke="#2a6fc2" stroke-width="1.2"/>
<rect x="881.5" y="407.5" width="38" height="15" rx="4" fill="#cfe1f8" stroke="#2a6fc2" stroke-width="1.2"/>
<rect x="919.5" y="437.5" width="40" height="15" rx="4" fill="#cfe1f8" stroke="#2a6fc2" stroke-width="1.2"/>
<path d="M 602.7 215.5 L 610.00 215.50 Q 612.5 215.5 612.50 218.00 L 612.50 231.00 Q 612.5 233.5 610.00 233.50 L 585.00 233.50 Q 582.5 233.5 582.50 236.00 L 582.50 252.00 Q 582.5 254.5 585.00 254.50 L 594 254.5" fill="none" stroke="#4a4a4a" stroke-width="1"/>
<path d="M 594 254.5 L 588.5 251.3 L 588.5 257.7 Z" fill="#111"/>
<path d="M 614.5 254.5 L 622.00 254.50 Q 624.5 254.5 624.50 257.00 L 624.50 271.00 Q 624.5 273.5 622.00 273.50 L 604.00 273.50 Q 601.5 273.5 601.50 276.00 L 601.50 283.00 Q 601.5 285.5 604.00 285.50 L 614 285.5" fill="none" stroke="#4a4a4a" stroke-width="1"/>
<path d="M 614 285.5 L 608.5 282.3 L 608.5 288.7 Z" fill="#111"/>
<path d="M 633.5 285.5 L 641.00 285.50 Q 643.5 285.5 643.50 288.00 L 643.5 300" fill="none" stroke="#4a4a4a" stroke-width="1"/>
<path d="M 643.5 300 L 640.3 294.5 L 646.7 294.5 Z" fill="#111"/>
<path d="M 671.5 307.5 L 676.5 307.5" stroke="#4a4a4a" stroke-width="1"/>
<path d="M 735.5 312 L 735.50 328.00 Q 735.5 330.5 738.00 330.50 L 747 330.5" fill="none" stroke="#4a4a4a" stroke-width="1"/>
<path d="M 747 330.5 L 741.5 327.3 L 741.5 333.7 Z" fill="#111"/>
<path d="M 766.5 330.5 L 774.00 330.50 Q 776.5 330.5 776.50 333.00 L 776.5 353" fill="none" stroke="#4a4a4a" stroke-width="1"/>
<path d="M 776.5 353 L 773.3 347.5 L 779.7 347.5 Z" fill="#111"/>
<path d="M 842.5 361.5 L 851.00 361.50 Q 853.5 361.5 853.50 364.00 L 853.5 384" fill="none" stroke="#4a4a4a" stroke-width="1"/>
<path d="M 853.5 384 L 850.3 378.5 L 856.7 378.5 Z" fill="#111"/>
<path d="M 881.5 392.5 L 889.00 392.50 Q 891.5 392.5 891.50 395.00 L 891.5 407" fill="none" stroke="#4a4a4a" stroke-width="1"/>
<path d="M 891.5 407 L 888.3 401.5 L 894.7 401.5 Z" fill="#111"/>
<path d="M 919.5 414.5 L 927.00 414.50 Q 929.5 414.5 929.50 417.00 L 929.5 437" fill="none" stroke="#4a4a4a" stroke-width="1"/>
<path d="M 929.5 437 L 926.3 431.5 L 932.7 431.5 Z" fill="#111"/>
</svg>
<div class="a" style="left:170px;width:400px;text-align:right;top:42.0px;font-size:11px;letter-spacing:-0.3px;color:#1e1e1e;line-height:13px">クライアントのウェブサイト</div>
<div class="a" style="left:170px;width:400px;text-align:right;top:65.5px;font-size:11px;letter-spacing:-0.3px;color:#1e1e1e;line-height:13px">制作前</div>
<div class="a" style="left:168px;width:400px;text-align:right;top:96.5px;font-size:11px;letter-spacing:-0.3px;color:#1e1e1e;line-height:13px">クライアントのワークサイトを開始</div>
<div class="a" style="left:163px;width:400px;text-align:right;top:136.0px;font-size:11px;letter-spacing:-0.3px;color:#1e1e1e;line-height:13px">クライアントへのヒアリングと目的の確認</div>
<div class="a" style="left:182px;width:400px;text-align:right;top:166.5px;font-size:11px;letter-spacing:-0.3px;color:#1e1e1e;line-height:13px">ユーザシナリオ</div>
<div class="a" style="left:213px;width:400px;text-align:right;top:189.0px;font-size:11px;letter-spacing:-0.3px;color:#1e1e1e;line-height:13px">比較分析</div>
<div class="a" style="left:316px;width:400px;text-align:right;top:212.0px;font-size:11px;letter-spacing:-0.3px;color:#1e1e1e;line-height:13px">技術仕様</div>
<div class="a" style="left:347px;width:400px;text-align:right;top:242.5px;font-size:11px;letter-spacing:-0.3px;color:#1e1e1e;line-height:13px">プロジェクトの提案を作成する</div>
<div class="a" style="left:423px;width:400px;text-align:right;top:274.0px;font-size:11px;letter-spacing:-0.3px;color:#1e1e1e;line-height:13px">タイムラインを作成する</div>
<div class="a" style="left:461px;width:400px;text-align:right;top:296.0px;font-size:11px;letter-spacing:-0.3px;color:#1e1e1e;line-height:13px">タスクリストを作成する</div>
<div class="a" style="left:500px;width:400px;text-align:right;top:327.0px;font-size:11px;letter-spacing:-0.3px;color:#1e1e1e;line-height:13px">コンテンツチャートを作成する</div>
<div class="a" style="left:604.0px;top:96.5px;font-size:11px;letter-spacing:-0.3px;color:#1e1e1e;line-height:13px">顧客; プロジェクトマネージャー; デザイナー; デベロ...</div>
<div class="a" style="left:615.5px;top:136.0px;font-size:11px;letter-spacing:-0.3px;color:#1e1e1e;line-height:13px">顧客; プロジェクトマネージャー</div>
<div class="a" style="left:635.0px;top:166.5px;font-size:11px;letter-spacing:-0.3px;color:#1e1e1e;line-height:13px">顧客; プロダクトマネージャー</div>
<div class="a" style="left:664.0px;top:189.0px;font-size:11px;letter-spacing:-0.3px;color:#1e1e1e;line-height:13px">プロダクトマネージャー</div>
<div class="a" style="left:769.5px;top:212.0px;font-size:11px;letter-spacing:-0.3px;color:#1e1e1e;line-height:13px">デベロッパー; プロダクトマネージャー</div>
<div class="a" style="left:846.0px;top:242.5px;font-size:11px;letter-spacing:-0.3px;color:#1e1e1e;line-height:13px">プロジェクトマネージャー</div>
<div class="a" style="left:884.5px;top:274.0px;font-size:11px;letter-spacing:-0.3px;color:#1e1e1e;line-height:13px">プロジェクトマネージャー</div>
<div class="a" style="left:889.5px;top:365.5px;font-size:11px;letter-spacing:-0.3px;color:#1e1e1e;line-height:13px">コミュニケーションを定義する</div>
</div>
<svg class="a" style="left:22px;top:88px" width="25" height="18"><path d="M1 1.5 L23 1.5 L23 2.8 L20.5 7 L18 2.8 L6 2.8 L3.5 7 L1 2.8 Z" fill="#f2f2f2"/><rect x="3" y="8" width="7" height="2" fill="#f2f2f2"/><rect x="9" y="11" width="7" height="2" fill="#f2f2f2"/><rect x="16" y="14" width="6" height="2" fill="#f2f2f2"/></svg>
<div class="a" style="left:51px;top:91px;font-size:11px;line-height:12px;color:#d0d0d0;letter-spacing:-0.6px">作業分割</div>
<svg class="a" style="left:94px;top:90px" width="11" height="17"><path d="M1.5 1.5 L8.5 8.5 L1.5 15.5" fill="none" stroke="#383b3d" stroke-width="1"/><path d="M2.5 1.5 L9.5 8.5 L2.5 15.5" fill="none" stroke="#62676a" stroke-width="0.7"/></svg>
<div class="a" style="left:107px;top:91px;font-size:11px;line-height:12px;color:#f0f0f0;letter-spacing:-0.6px">エントリー</div>
<svg class="a" style="left:850px;top:84px" width="30" height="26"><defs><linearGradient id="fg" x1="0" y1="0" x2="0" y2="1"><stop offset="0" stop-color="#f4f4f4"/><stop offset="1" stop-color="#c8c8c8"/></linearGradient></defs><path d="M7 7.3 L23 7.3 L16.3 15.5 L16.3 20.5 Q15 21.8 13.7 20.5 L13.7 15.5 Z" fill="url(#fg)"/><path d="M18.3 11.2 Q22.3 10.8 22 13.6 Q21.6 16.3 17 16" fill="none" stroke="#d8d8d8" stroke-width="1.3"/><ellipse cx="15" cy="7.3" rx="8" ry="2.1" fill="#3c3f42" stroke="#e6e6e6" stroke-width="1.2"/></svg>
<svg class="a" style="left:896px;top:84px" width="26" height="24"><defs><linearGradient id="wg" x1="0" y1="0" x2="0" y2="1"><stop offset="0" stop-color="#f2f2f2"/><stop offset="1" stop-color="#c4c4c4"/></linearGradient></defs><g fill="url(#wg)"><path d="M6.5 19.5 L15 11" stroke="url(#wg)" stroke-width="4.6" stroke-linecap="round"/><circle cx="17.8" cy="8.5" r="5.4"/></g><path d="M18 9 L23.5 3.5" stroke="#4e5356" stroke-width="3.4" stroke-linecap="round"/><circle cx="6.8" cy="19.2" r="1.2" fill="#4e5356"/></svg>
<div class="a" style="left:1017px;top:92px;font-size:11px;line-height:12px;color:#a8a8a8;letter-spacing:-0.5px">アクティビティ:</div><div class="a" style="left:1096px;top:92px;font-size:11px;line-height:12px;color:#dcdcdc;font-weight:bold;letter-spacing:-0.3px">計画</div>
<div class="a" style="left:955px;top:112px;width:281px;height:1px;background:#2f3133"></div>
<div class="a" style="left:955px;top:113px;width:281px;height:1px;background:#5b5e61"></div>
<div class="a" style="left:955px;top:146px;width:281px;height:1px;background:#2f3133"></div>
<div class="a" style="left:955px;top:147px;width:281px;height:1px;background:#5b5e61"></div>
<div class="a" style="left:978px;top:113px;width:36px;height:33px;background:linear-gradient(#3f4245,#45484b);box-shadow:inset 1px 0 0 #3a3d40,inset -1px 0 0 #3a3d40"></div>
<svg class="a" style="left:980px;top:116px" width="30" height="28"><defs><linearGradient id="cbg" x1="0" y1="0" x2="0" y2="1"><stop offset="0" stop-color="#f0f0f0"/><stop offset="1" stop-color="#c2c2c2"/></linearGradient></defs><rect x="9.7" y="8.6" width="14.5" height="14.7" rx="1.2" fill="url(#cbg)"/><path d="M12.6 10.6 L12.6 8.4 Q12.6 7.6 13.4 7.6 L15.2 7.6 L15.6 6.5 L18.4 6.5 L18.8 7.6 L20.6 7.6 Q21.4 7.6 21.4 8.4 L21.4 10.6 Z" fill="#eeeeee" stroke="#3a3d40" stroke-width="0.8"/><path d="M12.3 16.2 L15.6 19.6 L21.6 13.4" fill="none" stroke="#111" stroke-width="2.2"/></svg>
<svg class="a" style="left:1020px;top:116px" width="30" height="28"><g transform="translate(16 15) rotate(-45)"><rect x="-8.8" y="-3.4" width="17.6" height="6.8" rx="1.6" fill="#34373a" stroke="#dcdcdc" stroke-width="1.8"/><rect x="-4.5" y="-1.4" width="9" height="2.8" rx="1.4" fill="#b8b8b8"/></g></svg>
<svg class="a" style="left:1060px;top:116px" width="30" height="28"><g fill="#dcdcdc"><rect x="7" y="7" width="9" height="1.9" rx="0.9"/><rect x="8" y="10" width="9.6" height="1.9" rx="0.9"/><rect x="8.5" y="13" width="8" height="1.9" rx="0.9"/><rect x="7.5" y="16" width="8" height="1.9" rx="0.9"/><rect x="6" y="19" width="9" height="1.9" rx="0.9"/></g><circle cx="18.5" cy="18.4" r="5" fill="#d8d8d8" stroke="#2e3032" stroke-width="0.8"/><path d="M20.3 16.4 Q19.8 15.6 18.5 15.6 Q17 15.6 17 16.9 Q17 17.9 18.5 18.3 Q20.1 18.7 20.1 19.9 Q20.1 21.1 18.5 21.1 Q17.1 21.1 16.6 20.3" fill="none" stroke="#111" stroke-width="1.2"/><path d="M18.5 14.6 L18.5 22.2" stroke="#111" stroke-width="0.9"/></svg>
<svg class="a" style="left:1100px;top:116px" width="28" height="28"><g fill="none" stroke="#dcdcdc" stroke-width="2.3"><path d="M 19.2 9.0 A 6.9 6.9 0 1 1 13.5 7.5"/></g><path d="M14.8 4.6 L18.6 7.6 L14.8 10.4 Z" fill="#dcdcdc"/><g stroke="#dcdcdc" stroke-width="1.1" fill="none"><path d="M10.6 19 L17.6 11"/><circle cx="12" cy="12.4" r="1.5"/><circle cx="16.2" cy="17.1" r="1.5"/></g></svg>
<svg class="a" style="left:1140px;top:116px" width="26" height="28"><g fill="none" stroke="#dcdcdc" stroke-width="1.3"><rect x="5.5" y="7.2" width="11.5" height="2.6" rx="1"/><rect x="5.5" y="13.2" width="11.5" height="2.6" rx="1"/><rect x="5.5" y="19.2" width="11.5" height="2.6" rx="1"/><rect x="18.5" y="7" width="2.6" height="3" rx="0.8"/><rect x="18.5" y="13" width="2.6" height="3" rx="0.8"/><rect x="18.5" y="19" width="2.6" height="3" rx="0.8"/></g></svg>
<svg class="a" style="left:1180px;top:116px" width="26" height="28"><path d="M10.5 7.4 L4.6 7.4 L4.6 22.3 L10 22.3 M13 22.3 L19.4 22.3 L19.4 14" fill="none" stroke="#dcdcdc" stroke-width="1.3"/><path d="M5 22.5 L6.6 17.3 L16.3 7.6 Q18 6 19.6 7.6 Q21.2 9.2 19.6 10.9 L9.9 20.6 Z" fill="#dcdcdc" stroke="#2e3032" stroke-width="0.6"/></svg>
<svg class="a" style="left:954px;top:158.7px" width="9" height="10"><path d="M1 0.8 L7.5 5 L1 9.2 Z" fill="#d0d0d0"/><path d="M1 9.2 L7.5 5" stroke="#222" stroke-width="0.7"/></svg>
<div class="a" style="left:969px;top:157.2px;font-size:12px;line-height:13px;color:#f4f4f4;font-weight:bold;text-shadow:0 1px 1px rgba(0,0,0,0.6);letter-spacing:-1.4px">タイトル</div>
<div class="a" style="left:1053px;top:158px;width:180px;height:19px;border-radius:3px;background:#3d4043;border:1px solid #232527;box-shadow:0 1px 0 #5b5e61"></div>
<div class="a" style="left:1057px;top:161.0px;font-size:11px;line-height:13px;color:#ececec;letter-spacing:-0.85px">クライアントのウェブサイト</div>
<div class="a" style="left:955px;top:183px;width:281px;height:1px;background:#333638"></div>
<div class="a" style="left:955px;top:184px;width:281px;height:1px;background:#5a5d60"></div>
<svg class="a" style="left:954px;top:199.5px" width="9" height="10"><path d="M1 0.8 L7.5 5 L1 9.2 Z" fill="#d0d0d0"/><path d="M1 9.2 L7.5 5" stroke="#222" stroke-width="0.7"/></svg>
<div class="a" style="left:969px;top:198.0px;font-size:12px;line-height:13px;color:#f4f4f4;font-weight:bold;text-shadow:0 1px 1px rgba(0,0,0,0.6);letter-spacing:-1.4px">作業</div>
<div class="a" style="left:1053px;top:195px;width:180px;height:19px;border-radius:3px;background:#3d4043;border:1px solid #232527;box-shadow:0 1px 0 #5b5e61"></div>
<div class="a" style="left:969px;top:226.0px;font-size:11px;line-height:13px;color:#d6d6d6;text-shadow:0 1px 0 rgba(0,0,0,0.25);letter-spacing:-0.2px">所要期間</div>
<div class="a" style="left:1053px;top:223px;width:180px;height:19px;border-radius:3px;background:#3d4043;border:1px solid #232527;box-shadow:0 1px 0 #5b5e61"></div>
<div class="a" style="left:969px;top:253.5px;font-size:11px;line-height:13px;color:#d6d6d6;text-shadow:0 1px 0 rgba(0,0,0,0.25);letter-spacing:-0.6px">マイルストーン</div>
<div class="a" style="left:1053px;top:254px;width:12px;height:12px;border-radius:2px;background:#45484b;border:1px solid #35383a"></div>
<div class="a" style="left:955px;top:277px;width:281px;height:1px;background:#333638"></div>
<div class="a" style="left:955px;top:278px;width:281px;height:1px;background:#5a5d60"></div>
<div class="a" style="left:969px;top:291.5px;font-size:11px;line-height:13px;color:#d6d6d6;text-shadow:0 1px 0 rgba(0,0,0,0.25);letter-spacing:-0.2px">開始</div>
<div class="a" style="left:1053px;top:289px;width:180px;height:18px;border-radius:3px;background:#3d4043;border:1px solid #232527;box-shadow:0 1px 0 #5b5e61"></div>
<div class="a" style="left:1060px;top:291.5px;font-size:11px;line-height:13px;color:#ececec;letter-spacing:-0.3px">最も早く</div>
<svg class="a" style="left:1219px;top:292.0px" width="8" height="12"><path d="M0.5 5 L3.5 1 L6.5 5 Z M0.5 7 L3.5 11 L6.5 7 Z" fill="#cfcfcf"/></svg>
<div class="a" style="left:969px;top:319.5px;font-size:11px;line-height:13px;color:#d6d6d6;text-shadow:0 1px 0 rgba(0,0,0,0.25);letter-spacing:-0.2px">最も早く</div>
<div class="a" style="left:1053px;top:317px;width:180px;height:18px;border-radius:3px;background:#3d4043;border:1px solid #232527;box-shadow:0 1px 0 #5b5e61"></div>
<div class="a" style="left:1057px;top:319.5px;font-size:11px;line-height:13px;color:#ececec;letter-spacing:-0.2px">2017年10月5日 午前0:00</div>
<div class="a" style="left:1214px;top:318px;width:1px;height:16px;background:#2a2c2e"></div>
<svg class="a" style="left:1218px;top:319px" width="12" height="13"><rect x="1" y="2.5" width="9.5" height="9" rx="1" fill="none" stroke="#cfcfcf" stroke-width="1"/><rect x="1" y="2.5" width="9.5" height="2" fill="#cfcfcf"/><rect x="3" y="0.8" width="1" height="2" fill="#cfcfcf"/><rect x="7.5" y="0.8" width="1" height="2" fill="#cfcfcf"/><g fill="#cfcfcf"><rect x="3" y="6" width="1.3" height="1.3"/><rect x="5.2" y="6" width="1.3" height="1.3"/><rect x="7.4" y="6" width="1.3" height="1.3"/><rect x="3" y="8.5" width="1.3" height="1.3"/><rect x="5.2" y="8.5" width="1.3" height="1.3"/><rect x="7.4" y="8.5" width="1.3" height="1.3"/></g></svg>
<div class="a" style="left:969px;top:348.0px;font-size:11px;line-height:13px;color:#d6d6d6;text-shadow:0 1px 0 rgba(0,0,0,0.25);letter-spacing:-0.2px">終了</div>
<div class="a" style="left:1053px;top:345px;width:180px;height:18px;border-radius:3px;background:#3d4043;border:1px solid #232527;box-shadow:0 1px 0 #5b5e61"></div>
<div class="a" style="left:1060px;top:347.5px;font-size:11px;line-height:13px;color:#ececec;letter-spacing:-0.3px">制約なし</div>
<svg class="a" style="left:1219px;top:348.0px" width="8" height="12"><path d="M0.5 5 L3.5 1 L6.5 5 Z M0.5 7 L3.5 11 L6.5 7 Z" fill="#cfcfcf"/></svg>
<div class="a" style="left:969px;top:376.0px;font-size:11px;line-height:13px;color:#d6d6d6;text-shadow:0 1px 0 rgba(0,0,0,0.25);letter-spacing:-0.2px">配置</div>
<div class="a" style="left:1053px;top:373px;width:180px;height:18px;border-radius:3px;background:#3d4043;border:1px solid #232527;box-shadow:0 1px 0 #5b5e61"></div>
<div class="a" style="left:1060px;top:375.5px;font-size:11px;line-height:13px;color:#ececec;letter-spacing:-0.3px">できるだけ早く</div>
<svg class="a" style="left:1219px;top:376.0px" width="8" height="12"><path d="M0.5 5 L3.5 1 L6.5 5 Z M0.5 7 L3.5 11 L6.5 7 Z" fill="#cfcfcf"/></svg>
<div class="a" style="left:955px;top:400px;width:281px;height:1px;background:#333638"></div>
<div class="a" style="left:955px;top:401px;width:281px;height:1px;background:#5a5d60"></div>
<svg class="a" style="left:954px;top:416.4px" width="9" height="10"><path d="M1 0.8 L7.5 5 L1 9.2 Z" fill="#d0d0d0"/><path d="M1 9.2 L7.5 5" stroke="#222" stroke-width="0.7"/></svg>
<div class="a" style="left:969px;top:414.9px;font-size:12px;line-height:13px;color:#f4f4f4;font-weight:bold;text-shadow:0 1px 1px rgba(0,0,0,0.6);letter-spacing:-1.4px">詳細</div>
<div class="a" style="left:955px;top:438px;width:281px;height:1px;background:#333638"></div>
<div class="a" style="left:955px;top:439px;width:281px;height:1px;background:#5a5d60"></div>
<svg class="a" style="left:953px;top:454.5px" width="11" height="9"><path d="M0.8 1 L9.8 1 L5.3 8 Z" fill="#d0d0d0"/></svg>
<div class="a" style="left:969px;top:452.5px;font-size:12px;line-height:13px;color:#f4f4f4;font-weight:bold;text-shadow:0 1px 1px rgba(0,0,0,0.6);letter-spacing:-1.4px">予測済み</div>
<div class="a" style="left:969px;top:480.5px;font-size:11px;line-height:13px;color:#d6d6d6;text-shadow:0 1px 0 rgba(0,0,0,0.25);letter-spacing:-0.2px">状況</div>
<div class="a" style="left:1052px;top:480.5px;font-size:11px;line-height:13px;color:#e6e6e6;text-shadow:0 1px 0 rgba(0,0,0,0.25);letter-spacing:0.08px">将来</div>
<div class="a" style="left:969px;top:508.0px;font-size:11px;line-height:13px;color:#d6d6d6;text-shadow:0 1px 0 rgba(0,0,0,0.25);letter-spacing:-0.2px">開始</div>
<div class="a" style="left:1052px;top:508.0px;font-size:11px;line-height:13px;color:#e6e6e6;text-shadow:0 1px 0 rgba(0,0,0,0.25);letter-spacing:0.08px">10月5, 2017 午前0:00</div>
<div class="a" style="left:969px;top:536.0px;font-size:11px;line-height:13px;color:#d6d6d6;text-shadow:0 1px 0 rgba(0,0,0,0.25);letter-spacing:-0.2px">終了</div>
<div class="a" style="left:1052px;top:536.0px;font-size:11px;line-height:13px;color:#e6e6e6;text-shadow:0 1px 0 rgba(0,0,0,0.25);letter-spacing:0.08px">11月20, 2017 午後3:00</div>
<div class="a" style="left:969px;top:564.0px;font-size:11px;line-height:13px;color:#d6d6d6;text-shadow:0 1px 0 rgba(0,0,0,0.25);letter-spacing:-0.2px">作業</div>
<div class="a" style="left:1052px;top:564.0px;font-size:11px;line-height:13px;color:#e6e6e6;text-shadow:0 1px 0 rgba(0,0,0,0.25);letter-spacing:0.08px">1.92 か月</div>
<div class="a" style="left:969px;top:592.0px;font-size:11px;line-height:13px;color:#d6d6d6;text-shadow:0 1px 0 rgba(0,0,0,0.25);letter-spacing:-0.2px">所要期間</div>
<div class="a" style="left:1052px;top:592.0px;font-size:11px;line-height:13px;color:#e6e6e6;text-shadow:0 1px 0 rgba(0,0,0,0.25);letter-spacing:0.08px">1.64 か月 (1.55 eか月)</div>
<div class="a" style="left:969px;top:620.0px;font-size:11px;line-height:13px;color:#d6d6d6;text-shadow:0 1px 0 rgba(0,0,0,0.25);letter-spacing:-0.2px">利用状況</div>
<svg class="a" style="left:1014px;top:710px" width="44" height="44"><g stroke="#3b3e41" stroke-width="1.4" fill="#4a4e51"><path d="M4.5 6 L39 6 L39 10.5 L36 10.5 L36 8.5 L4.5 8.5 Z"/><path d="M7 14 L38 14 L38 17 L7 17 Z"/><path d="M7 21.5 L37 21.5 L37 24.5 L7 24.5 Z"/><ellipse cx="21.5" cy="33" rx="17" ry="7.5"/><ellipse cx="21.5" cy="32" rx="12" ry="4.2" fill="#45494c"/><path d="M11 31 Q12 18 14 8 Q15 5 18 7 Q24 14 30 31 Q21 35 11 31 Z"/></g></svg>
<div class="a" style="left:1063px;top:723px;font-size:18px;line-height:20px;font-weight:bold;color:#484c4f;text-shadow:0 1px 0 rgba(110,115,118,0.55), 0 -1px 0 rgba(40,42,44,0.7);letter-spacing:0px">Merlin Project</div>
<svg class="a" style="left:0;top:0" width="0" height="0"><defs><filter id="sh" x="-20%" y="-20%" width="140%" height="150%"><feDropShadow dx="0" dy="1" stdDeviation="0.3" flood-color="#ffffff" flood-opacity="0.9"/></filter><linearGradient id="gd" x1="0" y1="0" x2="0" y2="1"><stop offset="0" stop-color="#3e3e3e"/><stop offset="1" stop-color="#6a6a6a"/></linearGradient></defs></svg>
<svg class="a" style="left:0px;top:28px;overflow:visible" width="60" height="32"><g filter="url(#sh)"><rect x="14" y="14.3" width="20" height="3.8" fill="#575757"/><rect x="22.1" y="6" width="3.9" height="20" fill="#575757"/></g></svg>
<div class="a" style="left:38px;top:28px;width:1px;height:31px;background:linear-gradient(rgba(160,160,160,0),#a9a9a9 30%,#a9a9a9 70%,rgba(160,160,160,0))"></div>
<div class="a" style="left:39px;top:28px;width:1px;height:31px;background:linear-gradient(rgba(255,255,255,0),rgba(255,255,255,.6) 50%,rgba(255,255,255,0))"></div>
<div class="a" style="left:161px;top:28px;width:1px;height:31px;background:linear-gradient(rgba(160,160,160,0),#a9a9a9 30%,#a9a9a9 70%,rgba(160,160,160,0))"></div>
<div class="a" style="left:162px;top:28px;width:1px;height:31px;background:linear-gradient(rgba(255,255,255,0),rgba(255,255,255,.6) 50%,rgba(255,255,255,0))"></div>
<svg class="a" style="left:43px;top:43px;overflow:visible" width="7" height="5"><path d="M0 0.3 L6.2 0.3 L3.1 4.3 Z" fill="#575757" filter="url(#sh)"/></svg>
<svg class="a" style="left:166px;top:43px;overflow:visible" width="7" height="5"><path d="M0 0.3 L6.2 0.3 L3.1 4.3 Z" fill="#575757" filter="url(#sh)"/></svg>
<svg class="a" style="left:216.5px;top:50px;overflow:visible" width="7" height="5"><path d="M0 0.3 L6.2 0.3 L3.1 4.3 Z" fill="#575757" filter="url(#sh)"/></svg>
<svg class="a" style="left:60px;top:30px;overflow:visible" width="62" height="26"><g fill="#a6a6a6" filter="url(#sh)"><rect x="5" y="5" width="24" height="1.8"/><rect x="16" y="10" width="13" height="1.7"/><rect x="16" y="15" width="13" height="1.7"/><rect x="16" y="20" width="13" height="1.7"/><path d="M5 14 L10 14 L10 11 L14.5 15.6 L10 20.3 L10 17.4 L5 17.4 Z"/><rect x="33" y="5" width="24" height="1.8"/><rect x="33" y="10" width="13" height="1.7"/><rect x="33" y="15" width="13" height="1.7"/><rect x="33" y="20" width="13" height="1.7"/><path d="M57 14 L52 14 L52 11 L47.5 15.6 L52 20.3 L52 17.4 L57 17.4 Z"/></g></svg>
<svg class="a" style="left:0;top:0;overflow:visible" width="1" height="1"><g filter="url(#sh)" transform="translate(147.6 44) rotate(-45) scale(1.2)" fill="none" stroke="#a6a6a6" stroke-width="2"><path d="M 0.6 -3.3 L 7.7 -3.3 Q 10.7 -3.3 10.7 -0.3 L 10.7 0.3 Q 10.7 3.3 7.7 3.3 L 0.6 3.3"/><path d="M -0.9 -3.3 L -7.7 -3.3 Q -10.7 -3.3 -10.7 -0.3 L -10.7 0.3 Q -10.7 3.3 -7.7 3.3 L -0.9 3.3"/><rect x="-4.9" y="-1.9" width="9.8" height="3.8" rx="1.9" fill="#a6a6a6" stroke="none"/></g></svg>
<svg class="a" style="left:188px;top:28px;overflow:visible" width="32" height="32"><g filter="url(#sh)"><path d="M 13.36 6.86 L 14.12 4.44 L 17.68 4.44 L 18.44 6.86 L 20.36 7.65 L 22.60 6.48 L 25.12 9.00 L 23.95 11.24 L 24.74 13.16 L 27.16 13.92 L 27.16 17.48 L 24.74 18.24 L 23.95 20.16 L 25.12 22.40 L 22.60 24.92 L 20.36 23.75 L 18.44 24.54 L 17.68 26.96 L 14.12 26.96 L 13.36 24.54 L 11.44 23.75 L 9.20 24.92 L 6.68 22.40 L 7.85 20.16 L 7.06 18.24 L 4.64 17.48 L 4.64 13.92 L 7.06 13.16 L 7.85 11.24 L 6.68 9.00 L 9.20 6.48 L 11.44 7.65 Z" fill="#575757"/><circle cx="15.9" cy="15.7" r="3.4" fill="none" stroke="#eeeeee" stroke-width="1.5"/><circle cx="15.9" cy="15.7" r="1.2" fill="#575757"/></g></svg>
<svg class="a" style="left:818px;top:28px;overflow:visible" width="34" height="32"><g fill="#474747" filter="url(#sh)"><path d="M6.1 3.9 L15.7 3.9 L15.7 8.8 L14.1 8.8 L14.1 5.7 L6.1 5.7 Z"/><path d="M27.8 4.1 L9.6 14.6 L16.4 14.6 L6.1 25.7 L24.3 13.0 L17.6 13.0 Z"/><path d="M14.1 21.6 L15.7 21.6 L15.7 22.7 L24.2 22.7 L24.2 20 L29.6 23.6 L24.2 27.8 L24.2 24.5 L14.1 24.5 Z"/></g></svg>
<svg class="a" style="left:893px;top:28px;overflow:visible" width="34" height="32"><g fill="#686868" stroke="#333" stroke-width="0.9" filter="url(#sh)"><path d="M6 6.8 Q6 4.1 8.9 4.1 Q11.8 4.1 11.8 6.8 Z"/><rect x="6" y="8.2" width="5.8" height="15.5"/><path d="M6 25.1 L11.8 25.1 Q11.8 27.8 8.9 27.8 Q6 27.8 6 25.1 Z"/><path d="M13.1 6.8 Q13.1 4.1 16 4.1 Q18.9 4.1 18.9 6.8 Z"/><rect x="13.1" y="8.2" width="5.8" height="15.5"/><path d="M13.1 25.1 L18.9 25.1 Q18.9 27.8 16 27.8 Q13.1 27.8 13.1 25.1 Z"/><g transform="rotate(-12 23 16)"><path d="M20 6.8 Q20 4.1 22.9 4.1 Q25.8 4.1 25.8 6.8 Z"/><rect x="20" y="8.2" width="5.8" height="15.5"/><path d="M20 25.1 L25.8 25.1 Q25.8 27.8 22.9 27.8 Q20 27.8 20 25.1 Z"/></g></g></svg>
<svg class="a" style="left:942px;top:28px;overflow:visible" width="34" height="32"><g fill="#575757" filter="url(#sh)"><path d="M 7.5 15.5 A 10.5 10.5 0 0 1 25.5 8.5" fill="none" stroke="#575757" stroke-width="3"/><path d="M29 3.9 L29 12.7 L20 12.7 Z"/><path d="M 28.5 16.3 A 10.5 10.5 0 0 1 10.5 23.5" fill="none" stroke="#575757" stroke-width="3"/><path d="M7.1 19.2 L15.9 19.2 L7.1 27.8 Z"/></g></svg>
<svg class="a" style="left:992px;top:28px;overflow:visible" width="34" height="32"><g filter="url(#sh)"><circle cx="18" cy="15.8" r="10.6" fill="none" stroke="#575757" stroke-width="2.2"/><g stroke="#575757" stroke-width="0.8"><path d="M15.3 11.2 L15.3 19.4 L22.7 15.3 Z" fill="none"/><path d="M15.3 11.2 L16.5 6"/><path d="M15.3 11.2 L8.5 10.4"/><path d="M15.3 19.4 L8.5 20.8"/><path d="M15.3 19.4 L17.1 26"/><path d="M22.7 15.3 L27 10.8"/><path d="M22.7 15.3 L27 20"/></g><circle cx="15.3" cy="11.2" r="1.6" fill="#575757"/><circle cx="15.3" cy="19.4" r="1.6" fill="#575757"/><rect x="21.4" y="14" width="2.8" height="2.8" fill="#575757"/></g></svg>
<svg class="a" style="left:1046px;top:28px;overflow:visible" width="34" height="32"><g filter="url(#sh)"><path d="M14.3 6 Q15.5 3.8 17.5 4.3 Q21.8 4.5 21.8 7.5 L21.8 11.5 Q21.5 13.5 20 14.5 L20 17.5 Q21 18.5 23 19 Q28.5 20.5 28.6 26.5 L7.1 26.5 Q7.3 20.5 13 19 Q15 18.5 15.8 17.5 L15.8 14.5 Q14.2 13.5 14 11.5 Z" fill="#575757"/><path d="M17.3 19.5 L19.1 19.5 L19.6 25.5 L18.2 27.5 L16.8 25.5 Z" fill="#e8e8e8"/></g></svg>
<svg class="a" style="left:1090px;top:28px;overflow:visible" width="34" height="32"><g fill="#575757" filter="url(#sh)"><path d="M6 5.5 L7.5 4 L21.5 17.5 L20 19 Z"/><path d="M19.5 17.5 L22 15 L29.8 23.2 Q30 24.5 29 25.5 Q28 26.5 26.8 26 L19 18.5 Z"/><path d="M20.5 4 Q17.5 5 17.8 9 L18.2 11 L6.5 22.5 Q5.5 24 6.5 25.5 Q8 26.8 9.5 25.8 L21.2 14 Q24 14.7 26.5 13.5 Q29.5 11.5 29.5 8 L26.8 10.3 L24 9.5 L23.3 6.8 L25.5 4 Q23 3.3 20.5 4 Z"/><ellipse cx="8.3" cy="24.2" rx="1.5" ry="1" fill="#e8e8e8"/></g></svg>
<svg class="a" style="left:1135px;top:28px;overflow:visible" width="34" height="32"><g filter="url(#sh)"><path d="M7.1 19.6 L7.1 6 Q7.1 4.9 8.2 4.9 L27.7 4.9 Q28.8 4.9 28.8 6 L28.8 19.6" fill="none" stroke="#575757" stroke-width="2"/><path d="M6.1 21 L29.8 21 L29.8 26 Q29.8 27.8 28 27.8 L8 27.8 Q6.1 27.8 6.1 26 Z" fill="#707070" stroke="#3a3a3a" stroke-width="0.8"/><path d="M18 9 L22.9 13.7 L20 13.7 L20 17.8 L16.1 17.8 L16.1 13.7 L13 13.7 Z" fill="#666"/></g></svg>
<svg class="a" style="left:1194px;top:28px;overflow:visible" width="34" height="32"><g filter="url(#sh)"><path d="M21.8 4.9 L8.2 4.9 Q7.1 4.9 7.1 6 L7.1 25.8 Q7.1 26.8 8.2 26.8 L21.8 26.8" fill="none" stroke="#575757" stroke-width="2"/><path d="M23 3.9 L28 3.9 Q29.8 3.9 29.8 5.8 L29.8 25.9 Q29.8 27.8 28 27.8 L23 27.8 Z" fill="#6a6a6a" stroke="#3f3f3f" stroke-width="0.8"/><path d="M11 14.1 L15.3 14.1 L15.3 11 L20 15.9 L15.3 20.8 L15.3 17.8 L11 17.8 Z" fill="#606060"/></g></svg>
</body></html>
